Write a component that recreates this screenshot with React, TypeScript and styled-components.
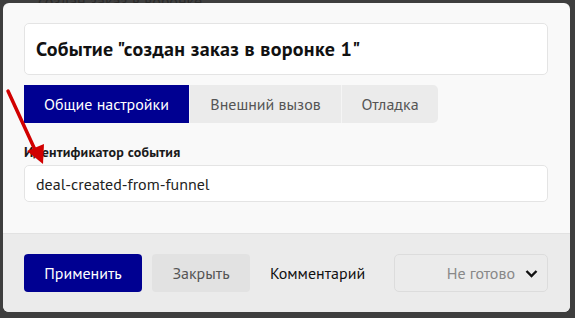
import React from "react";
import styled, { createGlobalStyle } from "styled-components";

const GlobalStyle = createGlobalStyle`
  html, body { margin: 0; padding: 0; }
  body {
    background: #3e3e3e;
    font-family: "PT Sans", "Roboto", "Noto Sans", sans-serif;
  }
`;

const Page = styled.div`
  position: relative;
  width: 575px;
  height: 318px;
  overflow: hidden;
  background: #3e3e3e;
`;

const BackdropText = styled.div`
  position: absolute;
  left: 38px;
  top: -9px;
  font-size: 16px;
  color: #2a2a2a;
  white-space: nowrap;
`;

const Modal = styled.div`
  position: absolute;
  left: 3px;
  top: 3px;
  width: 567px;
  height: 309px;
  border-radius: 6px;
  background: #f9f9f9;
  overflow: hidden;
  display: flex;
  flex-direction: column;
`;

const Body = styled.div`
  flex: 1;
  padding: 20px 22px 0 21px;
  display: flex;
  flex-direction: column;
`;

const TitleBox = styled.div`
  height: 52px;
  box-sizing: border-box;
  border: 1px solid #e4e4e4;
  border-radius: 5px;
  background: #fff;
  display: flex;
  align-items: center;
  padding-left: 11px;
  font-size: 20px;
  letter-spacing: 0.3px;
  font-weight: 700;
  color: #111;
`;

const Tabs = styled.div`
  margin-top: 10px;
  display: flex;
  height: 38px;
  align-self: flex-start;
  border-radius: 0 5px 5px 0;
  overflow: hidden;
`;

const Tab = styled.div<{ $active?: boolean; $w: number }>`
  width: ${(p) => p.$w}px;
  display: flex;
  align-items: center;
  justify-content: center;
  font-size: 16px;
  background: ${(p) => (p.$active ? "#000091" : "#ebebeb")};
  color: ${(p) => (p.$active ? "#fff" : "#555")};
  & + & {
    border-left: 1px solid #f5f5f5;
  }
`;

const Label = styled.div`
  margin-top: 19px;
  font-size: 14px;
  letter-spacing: 0.2px;
  font-weight: 700;
  color: #1a1a1a;
  line-height: 20px;
`;

const Input = styled.div`
  margin-top: 3px;
  height: 37px;
  box-sizing: border-box;
  border: 1px solid #e4e4e4;
  border-radius: 5px;
  background: #fff;
  display: flex;
  align-items: center;
  padding-left: 11px;
  font-size: 16px;
  color: #222;
`;

const Footer = styled.div`
  height: 79px;
  box-sizing: border-box;
  background: #ebebeb;
  border-top: 1px solid #e2e2e2;
  display: flex;
  align-items: center;
  padding: 0 22px 0 21px;
`;

const Button = styled.div<{ $primary?: boolean; $w: number }>`
  width: ${(p) => p.$w}px;
  height: 38px;
  border-radius: 4px;
  display: flex;
  align-items: center;
  justify-content: center;
  font-size: 16px;
  background: ${(p) => (p.$primary ? "#000091" : "#e2e2e2")};
  color: ${(p) => (p.$primary ? "#fff" : "#555")};
  margin-right: ${(p) => (p.$primary ? 10 : 20)}px;
`;

const Comment = styled.div`
  font-size: 16px;
  color: #111;
`;

const Select = styled.div`
  margin-left: auto;
  width: 154px;
  height: 38px;
  box-sizing: border-box;
  border: 1px solid #dcdcdc;
  border-radius: 5px;
  display: flex;
  align-items: center;
  justify-content: flex-end;
  padding-right: 9px;
  gap: 10px;
  font-size: 16px;
  color: #888;
`;

const Arrow = styled.svg`
  position: absolute;
  left: 0;
  top: 0;
  pointer-events: none;
`;

export default function App() {
  return (
    <>
      <GlobalStyle />
      <Page>
        <BackdropText>создан заказ в воронке</BackdropText>
        <Modal>
          <Body>
            <TitleBox>Событие "создан заказ в воронке 1"</TitleBox>
            <Tabs>
              <Tab $active $w={165}>Общие настройки</Tab>
              <Tab $w={151}>Внешний вызов</Tab>
              <Tab $w={96}>Отладка</Tab>
            </Tabs>
            <Label>Идентификатор события</Label>
            <Input>deal-created-from-funnel</Input>
          </Body>
          <Footer>
            <Button $primary $w={118}>Применить</Button>
            <Button $w={98}>Закрыть</Button>
            <Comment>Комментарий</Comment>
            <Select>
              <span>Не готово</span>
              <svg width="13" height="9" viewBox="0 0 13 9">
                <path d="M1.5 2 L6.5 7 L11.5 2" fill="none" stroke="#111" strokeWidth="2.4" />
              </svg>
            </Select>
          </Footer>
        </Modal>
        <Arrow width="575" height="318" viewBox="0 0 575 318">
          <line x1="8" y1="91" x2="36" y2="152" stroke="#d10000" strokeWidth="3.5" strokeLinecap="round" />
          <polygon points="43,164 27,151 44,144" fill="#d10000" />
        </Arrow>
      </Page>
    </>
  );
}
